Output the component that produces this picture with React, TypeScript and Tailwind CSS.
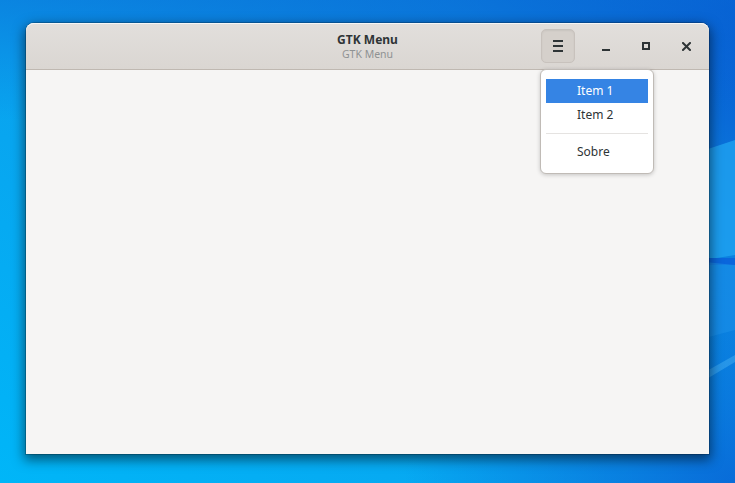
import React from "react";

function Wallpaper() {
  return (
    <svg className="absolute inset-0" width="735" height="483" viewBox="0 0 735 483">
      <defs>
        <linearGradient id="bg" x1="0" y1="1" x2="1" y2="0">
          <stop offset="0" stopColor="#00b6f8" />
          <stop offset="0.45" stopColor="#0aa2ee" />
          <stop offset="0.8" stopColor="#0b78dc" />
          <stop offset="1" stopColor="#0552cf" />
        </linearGradient>
        <linearGradient id="top" x1="0" y1="0" x2="0" y2="1">
          <stop offset="0" stopColor="#0a72d8" stopOpacity="0.55" />
          <stop offset="1" stopColor="#0a72d8" stopOpacity="0" />
        </linearGradient>
        <radialGradient id="br" cx="1" cy="1" r="0.45">
          <stop offset="0" stopColor="#0860d4" stopOpacity="0.8" />
          <stop offset="1" stopColor="#0860d4" stopOpacity="0" />
        </radialGradient>
      </defs>
      <rect width="735" height="483" fill="url(#bg)" />
      <rect width="735" height="120" fill="url(#top)" />
      <rect width="735" height="483" fill="url(#br)" />
      <polygon points="705,150 735,140 735,255 705,260" fill="#22a6f2" opacity="0.75" />
      <rect x="705" y="258" width="30" height="7" fill="#0a66dc" />
      <polygon points="705,262 735,265 735,330 705,338" fill="#1b8fe8" opacity="0.6" />
      <polygon points="705,372 735,355 735,362 705,380" fill="#5fc4f8" opacity="0.35" />
    </svg>
  );
}

export default function App() {
  return (
    <div
      className="relative w-[735px] h-[483px] overflow-hidden"
      style={{ fontFamily: '"Noto Sans", "Open Sans", sans-serif' }}
    >
      <Wallpaper />
      <div className="relative pt-[23px] pl-[26px]">
        <div className="relative w-[683px] h-[431px] flex flex-col rounded-t-[8px] bg-[#f6f5f4] shadow-[0_4px_12px_2px_rgba(0,0,0,0.5),0_0_0_1px_rgba(0,0,0,0.2)]">
          <div className="h-[47px] shrink-0 grid grid-cols-[1fr_auto_1fr] items-center rounded-t-[8px] border-b border-[#bfb8b1] bg-gradient-to-b from-[#e2dfdc] to-[#dad6d2] shadow-[inset_0_1px_0_rgba(255,255,255,0.7)]">
            <div />
            <div className="flex flex-col items-center leading-none mt-[1px]">
              <span className="text-[12px] font-bold text-[#2e3436] leading-[15px]">GTK Menu</span>
              <span className="text-[10.5px] text-[#8f9293] leading-[13px] mt-[1px]">GTK Menu</span>
            </div>
            <div className="flex items-center justify-end pr-[11px]">
              <div className="w-[34px] h-[34px] mr-[19px] mt-[-1px] rounded-[5px] border border-[#c8c2bd] bg-[#d5d0cb] flex flex-col items-center justify-center gap-[3px] shadow-[inset_0_1px_2px_rgba(0,0,0,0.06)]">
                <span className="block w-[10px] h-[2px] bg-[#2e3436]" />
                <span className="block w-[10px] h-[2px] bg-[#2e3436]" />
                <span className="block w-[10px] h-[2px] bg-[#2e3436]" />
              </div>
              <div className="w-[24px] h-[24px] flex items-center justify-center">
                <span className="block w-[8px] h-[2px] bg-[#2e3436] mt-[7px]" />
              </div>
              <div className="w-[24px] h-[24px] ml-[16px] flex items-center justify-center">
                <span className="block w-[8px] h-[8px] border-2 border-[#2e3436]" />
              </div>
              <div className="w-[24px] h-[24px] ml-[16px] flex items-center justify-center">
                <svg width="9" height="9" viewBox="0 0 9 9">
                  <path d="M1 1 L8 8 M8 1 L1 8" stroke="#2e3436" strokeWidth="2" strokeLinecap="square" />
                </svg>
              </div>
            </div>
          </div>
          <div className="flex-1" />

          <div className="absolute left-[514px] top-[46px] w-[114px] rounded-[6px] border border-[#c0bbb6] bg-white px-[5px] py-[9px] shadow-[0_1px_4px_rgba(0,0,0,0.2)]">
            <div className="h-[24px] flex items-center pl-[31px] bg-[#3584e4] text-white text-[12px]">Item 1</div>
            <div className="h-[24px] flex items-center pl-[31px] text-[#2e3436] text-[12px]">Item 2</div>
            <div className="my-[6px] h-px bg-[#e5e3e1]" />
            <div className="h-[24px] flex items-center pl-[31px] text-[#2e3436] text-[12px]">Sobre</div>
          </div>
        </div>
      </div>
    </div>
  );
}
